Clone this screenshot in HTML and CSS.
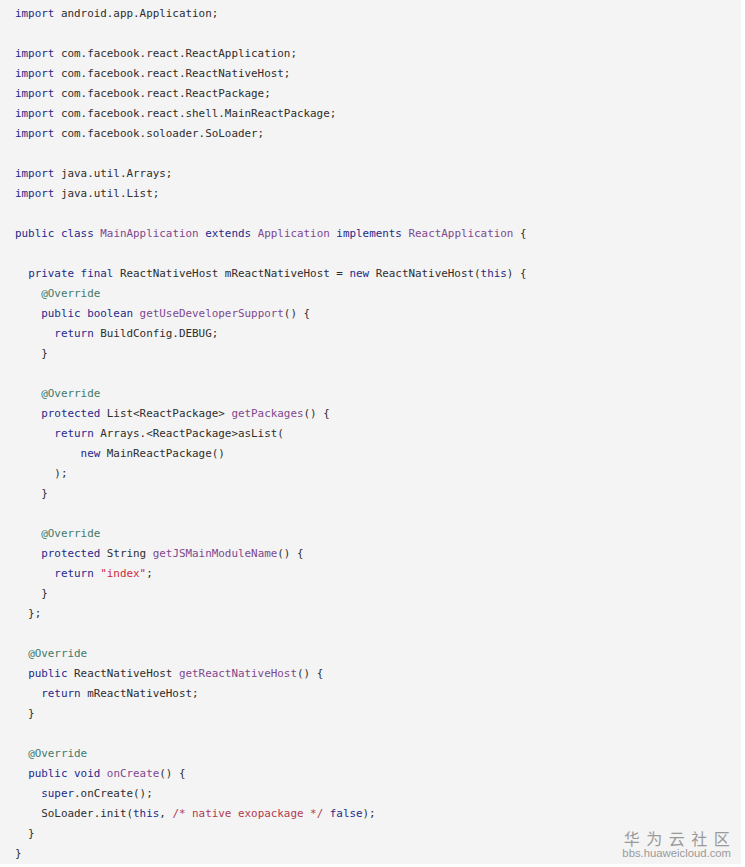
FILE: index.html
```html
<!DOCTYPE html>
<html>
<head>
<meta charset="utf-8">
<link rel="stylesheet" href="styles.css">
</head>
<body>
<div class="block">
<pre class="code"><span class="k">import</span> android.app.Application;

<span class="k">import</span> com.facebook.react.ReactApplication;
<span class="k">import</span> com.facebook.react.ReactNativeHost;
<span class="k">import</span> com.facebook.react.ReactPackage;
<span class="k">import</span> com.facebook.react.shell.MainReactPackage;
<span class="k">import</span> com.facebook.soloader.SoLoader;

<span class="k">import</span> java.util.Arrays;
<span class="k">import</span> java.util.List;

<span class="k">public</span> <span class="k">class</span> <span class="t">MainApplication</span> <span class="k">extends</span> <span class="t">Application</span> <span class="k">implements</span> <span class="t">ReactApplication</span> {

  <span class="k">private</span> <span class="k">final</span> ReactNativeHost mReactNativeHost = <span class="k">new</span> ReactNativeHost(<span class="k">this</span>) {
    <span class="m">@Override</span>
    <span class="k">public</span> <span class="k">boolean</span> <span class="t">getUseDeveloperSupport</span>() {
      <span class="k">return</span> BuildConfig.DEBUG;
    }

    <span class="m">@Override</span>
    <span class="k">protected</span> List&lt;ReactPackage&gt; <span class="t">getPackages</span>() {
      <span class="k">return</span> Arrays.&lt;ReactPackage&gt;asList(
          <span class="k">new</span> MainReactPackage()
      );
    }

    <span class="m">@Override</span>
    <span class="k">protected</span> String <span class="t">getJSMainModuleName</span>() {
      <span class="k">return</span> <span class="s">"index"</span>;
    }
  };

  <span class="m">@Override</span>
  <span class="k">public</span> ReactNativeHost <span class="t">getReactNativeHost</span>() {
    <span class="k">return</span> mReactNativeHost;
  }

  <span class="m">@Override</span>
  <span class="k">public</span> <span class="k">void</span> <span class="t">onCreate</span>() {
    <span class="k">super</span>.onCreate();
    SoLoader.init(<span class="k">this</span>, <span class="c">/* native exopackage */</span> <span class="k">false</span>);
  }
}</pre>
<div class="watermark">
<div class="wm-cn">华为云社区</div>
<div class="wm-en">bbs.huaweicloud.com</div>
</div>
</div>
</body>
</html>
```
FILE: styles.css
```css
html, body {
  margin: 0;
  padding: 0;
  background: #ffffff;
}
.block {
  position: relative;
  width: 741px;
  height: 864px;
  background: #f4f4f4;
  box-sizing: border-box;
}
.code {
  margin: 0;
  padding: 4px 0 0 15px;
  font-family: "DejaVu Sans Mono", "Liberation Mono", monospace;
  font-size: 10.9px;
  line-height: 20px;
  color: #2e2e2e;
  white-space: pre;
}
.k { color: #25298a; }
.t { color: #7f4890; }
.m { color: #3f7a6c; }
.s { color: #d02a40; }
.c { color: #b03a50; }
.watermark {
  position: absolute;
  right: 10px;
  bottom: 4px;
  text-align: center;
  color: #9a9a9a;
}
.wm-cn {
  font-family: "Noto Sans CJK SC", sans-serif;
  font-size: 16px;
  line-height: 18px;
  letter-spacing: 6.5px;
  margin-right: -6.5px;
}
.wm-en {
  font-family: "Liberation Sans", Arial, sans-serif;
  font-size: 11.3px;
  line-height: 13px;
}
```
